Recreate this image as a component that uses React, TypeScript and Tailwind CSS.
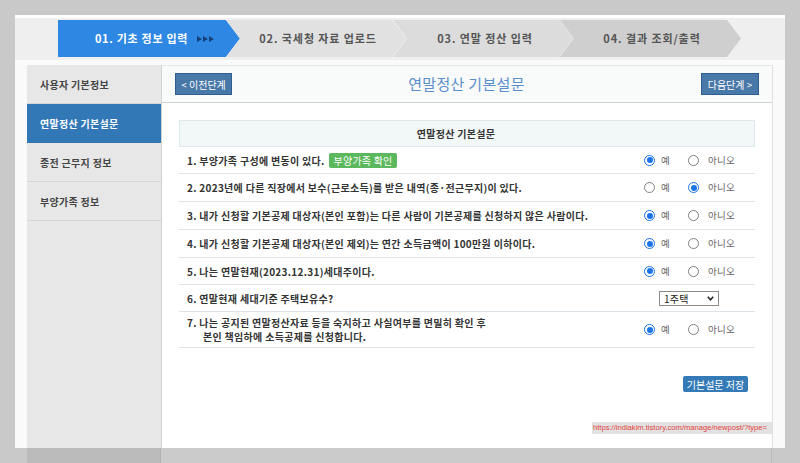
import React from 'react';

type Answer = 'yes' | 'no' | 'select';

const questions: { text: React.ReactNode; answer: Answer; h: string }[] = [
  {
    text: (
      <>
        1. 부양가족 구성에 변동이 있다.
        <span className="ml-[4px] inline-flex items-center h-[15px] px-[5px] rounded-[2px] bg-[#5cb85c] text-white font-normal text-[10px] tracking-[0.2px]">
          부양가족 확인
        </span>
      </>
    ),
    answer: 'yes',
    h: 'h-[27px]',
  },
  { text: '2. 2023년에 다른 직장에서 보수(근로소득)를 받은 내역(종·전근무지)이 있다.', answer: 'no', h: 'h-[28px]' },
  {
    text: '3. 내가 신청할 기본공제 대상자(본인 포함)는 다른 사람이 기본공제를 신청하지 않은 사람이다.',
    answer: 'yes',
    h: 'h-[28px]',
  },
  {
    text: '4. 내가 신청할 기본공제 대상자(본인 제외)는 연간 소득금액이 100만원 이하이다.',
    answer: 'yes',
    h: 'h-[28px]',
  },
  { text: '5. 나는 연말현재(2023.12.31)세대주이다.', answer: 'yes', h: 'h-[27px]' },
  { text: '6. 연말현재 세대기준 주택보유수?', answer: 'select', h: 'h-[27px]' },
  {
    text: (
      <span className="flex flex-col leading-[14px]">
        <span>7. 나는 공지된 연말정산자료 등을 숙지하고 사실여부를 면밀히 확인 후</span>
        <span className="pl-[16px]">본인 책임하에 소득공제를 신청합니다.</span>
      </span>
    ),
    answer: 'yes',
    h: 'h-[36px]',
  },
];

const menu = ['사용자 기본정보', '연말정산 기본설문', '종전 근무지 정보', '부양가족 정보'];

function Radio({ checked }: { checked: boolean }) {
  if (checked) {
    return (
      <span className="w-[11px] h-[11px] rounded-full border-[1.5px] border-[#1a73e8] bg-white flex items-center justify-center shrink-0">
        <span className="w-[6px] h-[6px] rounded-full bg-[#1a73e8]" />
      </span>
    );
  }
  return <span className="w-[11px] h-[11px] rounded-full border border-[#808080] bg-white shrink-0" />;
}

function AnswerCell({ answer }: { answer: Answer }) {
  if (answer === 'select') {
    return (
      <div className="w-[111px] flex items-center">
        <div className="ml-[15px] w-[60px] h-[15px] border border-[#8a8a8a] bg-white flex items-center justify-between pl-[4px] pr-[4px] text-[10px] text-[#222] font-normal">
          <span>1주택</span>
          <svg width="7" height="5" viewBox="0 0 7 5">
            <path d="M0.8 0.8 L3.5 3.8 L6.2 0.8" fill="none" stroke="#222" strokeWidth="1.5" />
          </svg>
        </div>
      </div>
    );
  }
  return (
    <div className="w-[111px] flex items-center text-[9.5px] text-[#666] font-normal">
      <Radio checked={answer === 'yes'} />
      <span className="ml-[6px] w-[27px]">예</span>
      <Radio checked={answer === 'no'} />
      <span className="ml-[9px]">아니오</span>
    </div>
  );
}

function Step({ label, bg, edge, text }: { label: string; bg: string; edge: string; text: string }) {
  return (
    <div
      className={`-ml-[14px] w-[181px] h-[37px] flex ${edge} [clip-path:polygon(0_0,167px_0,181px_50%,167px_100%,0_100%,14px_50%)]`}
    >
      <div
        className={`w-[180px] h-full flex items-center justify-center pl-[4px] ${bg} ${text} text-[11px] font-bold tracking-[0.9px] [clip-path:polygon(0_0,166px_0,180px_50%,166px_100%,0_100%,14px_50%)]`}
      >
        {label}
      </div>
    </div>
  );
}

export default function App() {
  return (
    <div className="w-[800px] h-[463px] overflow-hidden bg-[#c9c9c9] font-['Noto_Sans_CJK_KR',sans-serif] flex flex-col">
      <div className="ml-[15px] mt-[15px] w-[770px] h-[433px] shrink-0 bg-[#fafafa] flex flex-col">
        <div className="h-[3px] bg-white" />
        <div className="h-[42px] bg-[#efefef] flex pt-[2px] pl-[43px]">
          <div className="w-[182px] h-[37px] bg-[#2f87e4] flex items-center justify-center pl-[12px] text-white text-[11px] font-bold tracking-[0.7px] [clip-path:polygon(0_0,168px_0,182px_50%,168px_100%,0_100%)]">
            <span>01. 기초 정보 입력</span>
            <svg className="ml-[9px]" width="18" height="6" viewBox="0 0 18 6">
              <path d="M0 0 L5 3 L0 6Z M6 0 L11 3 L6 6Z M12 0 L17 3 L12 6Z" fill="#17407a" />
            </svg>
          </div>
          <Step label="02. 국세청 자료 업로드" bg="bg-[#e1e1e1]" edge="bg-[#ededed]" text="text-[#555]" />
          <Step label="03. 연말 정산 입력" bg="bg-[#dcdcdc]" edge="bg-[#e6e6e6]" text="text-[#555]" />
          <Step label="04. 결과 조회/출력" bg="bg-[#cfcfcf]" edge="bg-[#cfcfcf]" text="text-[#555]" />
        </div>
        <div className="h-[5px]" />
        <div className="flex-1 flex pl-[12px]">
          <div className="w-[135px] bg-[#e7e7e7] border-r border-[#d2d2d2] flex flex-col">
            {menu.map((m, i) => (
              <div
                key={m}
                className={`h-[39px] shrink-0 flex items-center pl-[13px] border-b text-[10px] tracking-[0.3px] font-bold ${
                  i === 1 ? 'bg-[#3378b6] text-white border-[#3378b6]' : 'text-[#444] border-[#d6d6d6]'
                }`}
              >
                {m}
              </div>
            ))}
          </div>
          <div className="w-[611px] bg-white border-r border-[#e0e0e0] flex flex-col">
            <div className="h-[38px] shrink-0 bg-[#f9fafa] border-t border-[#e6e6e6] border-b border-b-[#d2d2d2] flex items-center justify-between px-[13px]">
              <button className="w-[57px] h-[22px] bg-[#4878a8] border border-[#2f5f91] text-white text-[10px] flex items-center justify-center">
                &lt; 이전단계
              </button>
              <h1 className="text-[15px] text-[#5a8fcb] font-normal tracking-[0.3px]">연말정산 기본설문</h1>
              <button className="w-[58px] h-[22px] bg-[#4878a8] border border-[#2f5f91] text-white text-[10px] flex items-center justify-center">
                다음단계 &gt;
              </button>
            </div>
            <div className="mt-[17px] mx-[17px] flex flex-col">
              <div className="h-[27px] bg-[#f2f7f8] border border-[#dfe8ec] flex items-center justify-center pr-[22px] text-[10px] font-bold text-[#333] tracking-[0.3px]">
                연말정산 기본설문
              </div>
              {questions.map((q, i) => (
                <div
                  key={i}
                  className={`${q.h} border-b border-[#dce4e9] flex items-center pl-[8px] text-[10px] tracking-[0.3px] font-bold text-[#333]`}
                >
                  <div className="flex-1 flex items-center">{q.text}</div>
                  <AnswerCell answer={q.answer} />
                </div>
              ))}
            </div>
            <div className="mt-[28px] mx-[17px] pr-[7px] flex justify-end">
              <button className="w-[65px] h-[16px] bg-[#337ab7] rounded-[2px] text-white text-[10px] flex items-center justify-center">
                기본설문 저장
              </button>
            </div>
            <div className="mt-[30px] flex justify-end">
              <span className="w-[180px] h-[12px] bg-[#e2e2e2] text-[#e2403a] text-[7.6px] leading-[12px] font-['Liberation_Sans',sans-serif] whitespace-nowrap pl-[1px]">
                https://indiakim.tistory.com/manage/newpost/?type=
              </span>
            </div>
          </div>
        </div>
      </div>
      <div className="flex-1 flex">
        <div className="w-[27px] bg-[#c9c9c9]" />
        <div className="w-[134px] bg-[#bababa] border-r border-[#b3b3b3]" />
        <div className="w-[611px] bg-[#cbcbcb] border-r border-[#bdbdbd]" />
        <div className="flex-1 bg-[#c9c9c9]" />
      </div>
    </div>
  );
}
